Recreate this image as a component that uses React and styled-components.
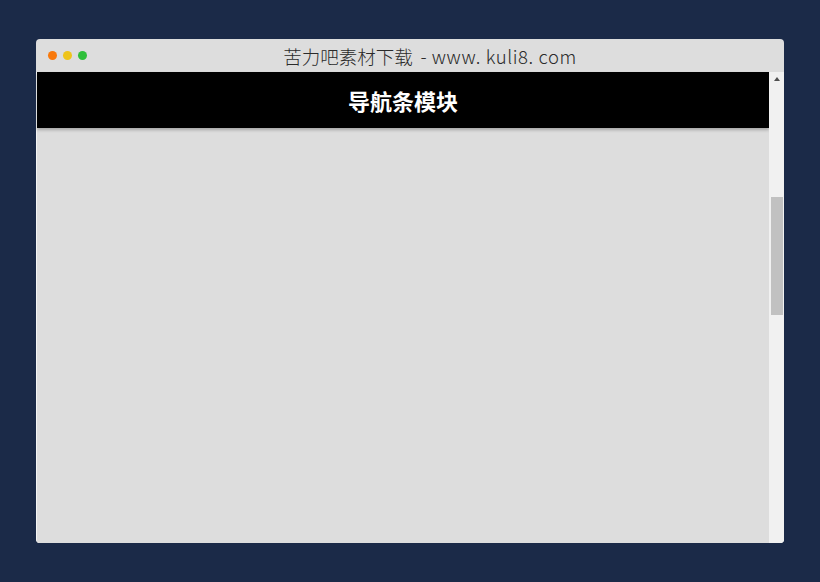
import React from "react";
import styled, { createGlobalStyle } from "styled-components";

const Global = createGlobalStyle`
  html, body { margin: 0; padding: 0; background: #1b2a48; }
  body { width: 820px; height: 582px; overflow: hidden; font-family: "Noto Sans CJK SC", "Noto Sans", sans-serif; }
`;

const Page = styled.div`
  padding: 39px 0 0 36px;
`;

const Window = styled.div`
  width: 748px;
  height: 504px;
  background: #dddddd;
  border-radius: 4px;
  overflow: hidden;
  display: flex;
  flex-direction: column;
`;

const TitleBar = styled.div`
  height: 33px;
  position: relative;
  display: flex;
  align-items: center;
  justify-content: center;
  flex-shrink: 0;
`;

const Dots = styled.div`
  position: absolute;
  left: 12px;
  top: 12px;
  display: flex;
  gap: 6px;
`;

const Dot = styled.span`
  width: 9px;
  height: 9px;
  border-radius: 50%;
  background: ${(p) => p.$c};
`;

const Title = styled.div`
  font-family: "Noto Sans CJK SC", sans-serif;
  font-weight: 300;
  font-size: 18.5px;
  color: #2a2a2a;
  margin-left: 40px;
  white-space: pre;
`;

const Latin = styled.span`
  letter-spacing: 0.6px;
  margin-left: 3px;
`;

const Body = styled.div`
  flex: 1;
  display: flex;
  padding-left: 1px;
  background: #f4f4f4;
  min-height: 0;
`;

const Content = styled.div`
  flex: 1;
  background: #dddddd;
  display: flex;
  flex-direction: column;
`;

const NavBar = styled.div`
  height: 56px;
  background: #000;
  color: #fff;
  display: flex;
  align-items: center;
  justify-content: center;
  font-family: "Noto Sans CJK SC", sans-serif;
  font-weight: 700;
  font-size: 22px;
  box-shadow: 0 2px 3px rgba(0, 0, 0, 0.25);
`;

const ScrollTrack = styled.div`
  width: 15px;
  background: #f1f1f1;
  display: flex;
  flex-direction: column;
  align-items: center;
`;

const Arrow = styled.div`
  width: 0;
  height: 0;
  margin-top: 5px;
  border-left: 3.5px solid transparent;
  border-right: 3.5px solid transparent;
  border-bottom: 4px solid #505050;
`;

const Thumb = styled.div`
  width: 12px;
  height: 118px;
  margin-top: 116px;
  background: #c1c1c1;
`;

export default function App() {
  return (
    <>
      <Global />
      <Page>
        <Window>
          <TitleBar>
            <Dots>
              <Dot $c="#f8790c" />
              <Dot $c="#eec41b" />
              <Dot $c="#2fbf3a" />
            </Dots>
            <Title>
              苦力吧素材下载<Latin> - www. kuli8. com</Latin>
            </Title>
          </TitleBar>
          <Body>
            <Content>
              <NavBar>导航条模块</NavBar>
            </Content>
            <ScrollTrack>
              <Arrow />
              <Thumb />
            </ScrollTrack>
          </Body>
        </Window>
      </Page>
    </>
  );
}
